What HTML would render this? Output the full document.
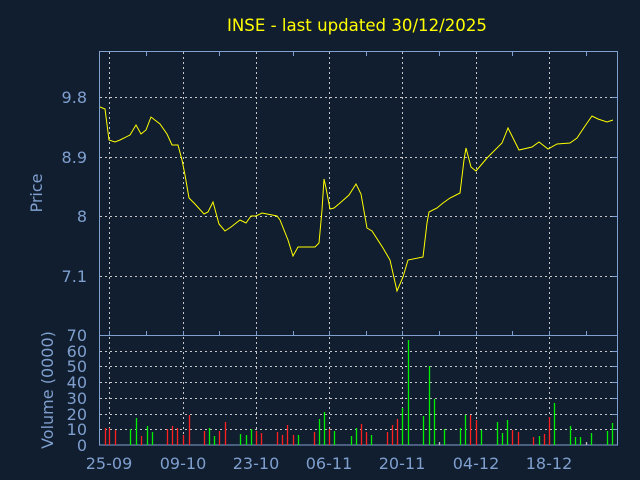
<!DOCTYPE html>
<html><head><meta charset="utf-8"><style>
html,body{margin:0;padding:0;background:#111e2f;}
svg{display:block;font-family:"DejaVu Sans","Liberation Sans",sans-serif;}
</style></head><body>
<svg width="640" height="480" viewBox="0 0 640 480">
<rect width="640" height="480" fill="#111e2f"/>
<text x="357" y="31" fill="#ffff00" font-size="16.6" text-anchor="middle">INSE - last updated 30/12/2025</text>
<g stroke="#c8c8c8" stroke-width="1" stroke-dasharray="2,3" fill="none">
<path d="M100 97.5H617M100 157.5H617M100 216.5H617M100 276.5H617"/>
<path d="M100 351.5H617M100 366.5H617M100 382.5H617M100 398.5H617M100 414.5H617M100 429.5H617"/>
<path d="M109.5 52V445M183.5 52V445M256.5 52V445M329.5 52V445M402.5 52V445M476.5 52V445M549.5 52V445"/>
</g>
<g stroke="#80a0d0" stroke-width="1" fill="none">
<rect x="99.5" y="51.5" width="518" height="393.5"/>
<path d="M99.5 335.5H617.5"/>
<path d="M146.5 52v4M219.5 52v4M293.5 52v4M366.5 52v4M439.5 52v4M512.5 52v4M586.5 52v4"/>
<path d="M146.5 335v-4M219.5 335v-4M293.5 335v-4M366.5 335v-4M439.5 335v-4M512.5 335v-4M586.5 335v-4"/>
<path d="M109.5 335v-4M183.5 335v-4M256.5 335v-4M329.5 335v-4M402.5 335v-4M476.5 335v-4M549.5 335v-4"/>
<path d="M617 97.5h-5M617 157.5h-5M617 216.5h-5M617 276.5h-5M617 351.5h-5M617 366.5h-5M617 382.5h-5M617 398.5h-5M617 414.5h-5M617 429.5h-5"/>
</g>
<g fill="#7f9fcf" font-size="16" text-anchor="end">
<text x="87" y="103">9.8</text>
<text x="87" y="163">8.9</text>
<text x="87" y="222">8</text>
<text x="87" y="282">7.1</text>
<text x="87" y="341">70</text>
<text x="87" y="357">60</text>
<text x="87" y="372">50</text>
<text x="87" y="388">40</text>
<text x="87" y="404">30</text>
<text x="87" y="420">20</text>
<text x="87" y="435">10</text>
<text x="87" y="451">0</text>
</g>
<g fill="#7f9fcf" font-size="16" text-anchor="middle">
<text x="109" y="469">25-09</text>
<text x="183" y="469">09-10</text>
<text x="256" y="469">23-10</text>
<text x="329" y="469">06-11</text>
<text x="402" y="469">20-11</text>
<text x="476" y="469">04-12</text>
<text x="549" y="469">18-12</text>
<text transform="translate(42,193) rotate(-90)">Price</text>
<text transform="translate(53,390) rotate(-90)">Volume (0000)</text>
</g>
<polyline fill="none" stroke="#ffff00" stroke-width="1" points="100,107 105,109 109,140 115,142 120,140 130,135 136,125 141,134 146,130 151,117 160,124 167,134 172,145 178,145 182,160 185,175 189,198 195,204 204,214 208,212 213,202 219,224 225,231 231,227 240,220 246,223 251,216 256,216 262,213 267,214 277,216 280,220 288,240 293,256 298,247 315,247 319,243 322,210 324,179 326,188 330,209 334,208 340,203 349,195 356,184 361,194 367,228 372,231 383,248 390,260 397,291 403,277 408,260 423,257 427,223 429,212 437,208 443,203 450,198 460,193 464,160 466,148 471,167 476,171 487,158 502,143 508,128 519,150 532,147 539,142 548,149 557,144 570,143 577,138 585,126 592,116 598,119 607,122 613,120"/>
<g stroke-width="1.3">
<path stroke="#ff2020" d="M105.5 445V428M109.5 445V428M115.5 445V430M141.5 445V436M167.5 445V429M172.5 445V426M177.5 445V428M183.5 445V435M189.5 445V415M204.5 445V431M219.5 445V431M225.5 445V422M256.5 445V431M261.5 445V433M277.5 445V432M282.5 445V435M287.5 445V425M293.5 445V435M314.5 445V432M329.5 445V429M361.5 445V424M366.5 445V432M387.5 445V432M392.5 445V425M397.5 445V419M470.5 445V415M476.5 445V420M512.5 445V430M518.5 445V432M533.5 445V437M544.5 445V434M549.5 445V417"/>
<path stroke="#00ee00" d="M130.5 445V429M136.5 445V418M147.5 445V426M152.5 445V432M209.5 445V428M214.5 445V436M240.5 445V434M246.5 445V435M251.5 445V429M298.5 445V435M319.5 445V419M324.5 445V412M334.5 445V431M351.5 445V436M356.5 445V428M371.5 445V435M402.5 445V408M408.5 445V340M423.5 445V416M429.5 445V366M434.5 445V399M444.5 445V429M460.5 445V428M465.5 445V415M481.5 445V430M497.5 445V422M502.5 445V433M507.5 445V420M539.5 445V436M554.5 445V403M570.5 445V426M575.5 445V437M580.5 445V437M591.5 445V433M607.5 445V431M612.5 445V423"/>
<path stroke="#c0c0c0" d="M439.5 445V442M586.5 445V442"/>
</g>
</svg>
</body></html>
